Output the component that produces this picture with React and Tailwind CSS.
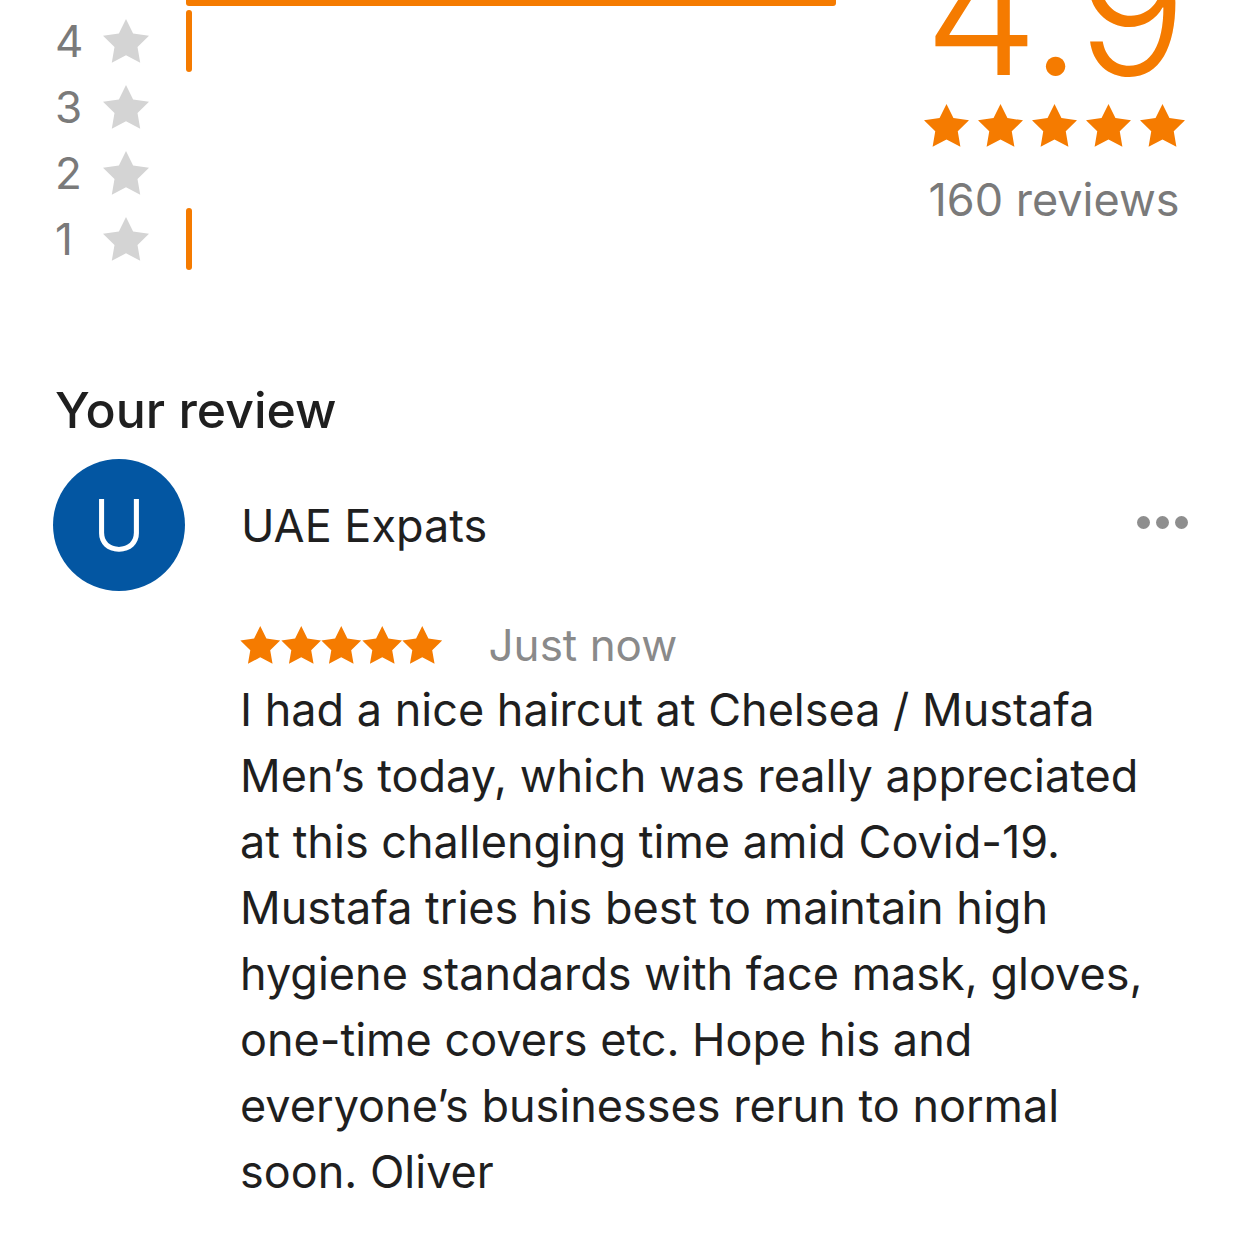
import React from "react";

const StarIcon = ({ className }) => (
  <svg viewBox="2 2 20 19.1" className={className} fill="currentColor">
    <polygon points="12,2 15.09,8.26 22,9.27 17,14.14 18.18,21.02 12,17.77 5.82,21.02 7,14.14 2,9.27 8.91,8.26" />
  </svg>
);

const distribution = [
  { stars: 5, width: 650 },
  { stars: 4, width: 6 },
  { stars: 3, width: 0 },
  { stars: 2, width: 0 },
  { stars: 1, width: 6 },
];

const reviewLines = [
  "I had a nice haircut at Chelsea / Mustafa",
  "Men\u2019s today, which was really appreciated",
  "at this challenging time amid Covid-19.",
  "Mustafa tries his best to maintain high",
  "hygiene standards with face mask, gloves,",
  "one-time covers etc. Hope his and",
  "everyone\u2019s businesses rerun to normal",
  "soon. Oliver",
];

export default function App() {
  return (
    <div className="h-[1242px] overflow-hidden bg-white font-['Inter','Liberation_Sans',sans-serif] text-[#1f1f1f]">
      {/* rating summary, scrolled partly out of view */}
      <div className="-mt-[56px] flex pl-[55px] pr-[58px]">
        <div className="flex flex-col gap-[4px]">
          {distribution.map((row) => (
            <div key={row.stars} className="flex h-[62px] items-center">
              <span className="w-[48px] text-[44px] leading-none text-[#7a7a7a]">{row.stars}</span>
              <StarIcon className="h-[44px] w-[46px] text-[#d4d4d4]" />
              <div className="ml-[37px] h-full w-[650px]">
                {row.width > 0 && (
                  <div className="h-full rounded-[3px] bg-[#f57b00]" style={{ width: row.width }} />
                )}
              </div>
            </div>
          ))}
        </div>
        <div className="-mt-[27px] ml-auto flex w-[260px] flex-col items-center">
          <span className="text-[183px] font-light leading-none tracking-[-3px] text-[#f57b00]">4.9</span>
          <div className="mt-[4px] flex gap-[9px] text-[#f57b00]">
            {[0, 1, 2, 3, 4].map((i) => (
              <StarIcon key={i} className="h-[43px] w-[45px]" />
            ))}
          </div>
          <span className="mt-[30px] text-[45px] leading-none text-[#7a7a7a]">160 reviews</span>
        </div>
      </div>

      {/* your review */}
      <h2 className="mt-[115px] pl-[55px] text-[50px] font-medium leading-none">Your review</h2>
      <div className="mt-[24px] flex items-center pl-[53px] pr-[54px]">
        <div className="flex h-[132px] w-[132px] items-center justify-center rounded-full bg-[#0356a2]">
          <span className="text-[72px] font-light leading-none text-white">U</span>
        </div>
        <span className="ml-[56px] text-[45px] leading-none">UAE Expats</span>
        <div className="ml-auto -mt-[6px] flex gap-[6px]">
          <span className="h-[13px] w-[13px] rounded-full bg-[#8e8e8e]" />
          <span className="h-[13px] w-[13px] rounded-full bg-[#8e8e8e]" />
          <span className="h-[13px] w-[13px] rounded-full bg-[#8e8e8e]" />
        </div>
      </div>
      <div className="pl-[240px]">
        <div className="mt-[32px] flex items-center">
          <div className="flex text-[#f57b00]">
            {[0, 1, 2, 3, 4].map((i) => (
              <StarIcon key={i} className="h-[38px] w-[40.5px]" />
            ))}
          </div>
          <span className="ml-[46px] text-[44px] leading-none text-[#8a8a8a]">Just now</span>
        </div>
        <p className="mt-[10px] text-[45px] leading-[66px]">
          {reviewLines.map((line) => (
            <span key={line} className="block whitespace-nowrap">{line}</span>
          ))}
        </p>
      </div>
    </div>
  );
}
